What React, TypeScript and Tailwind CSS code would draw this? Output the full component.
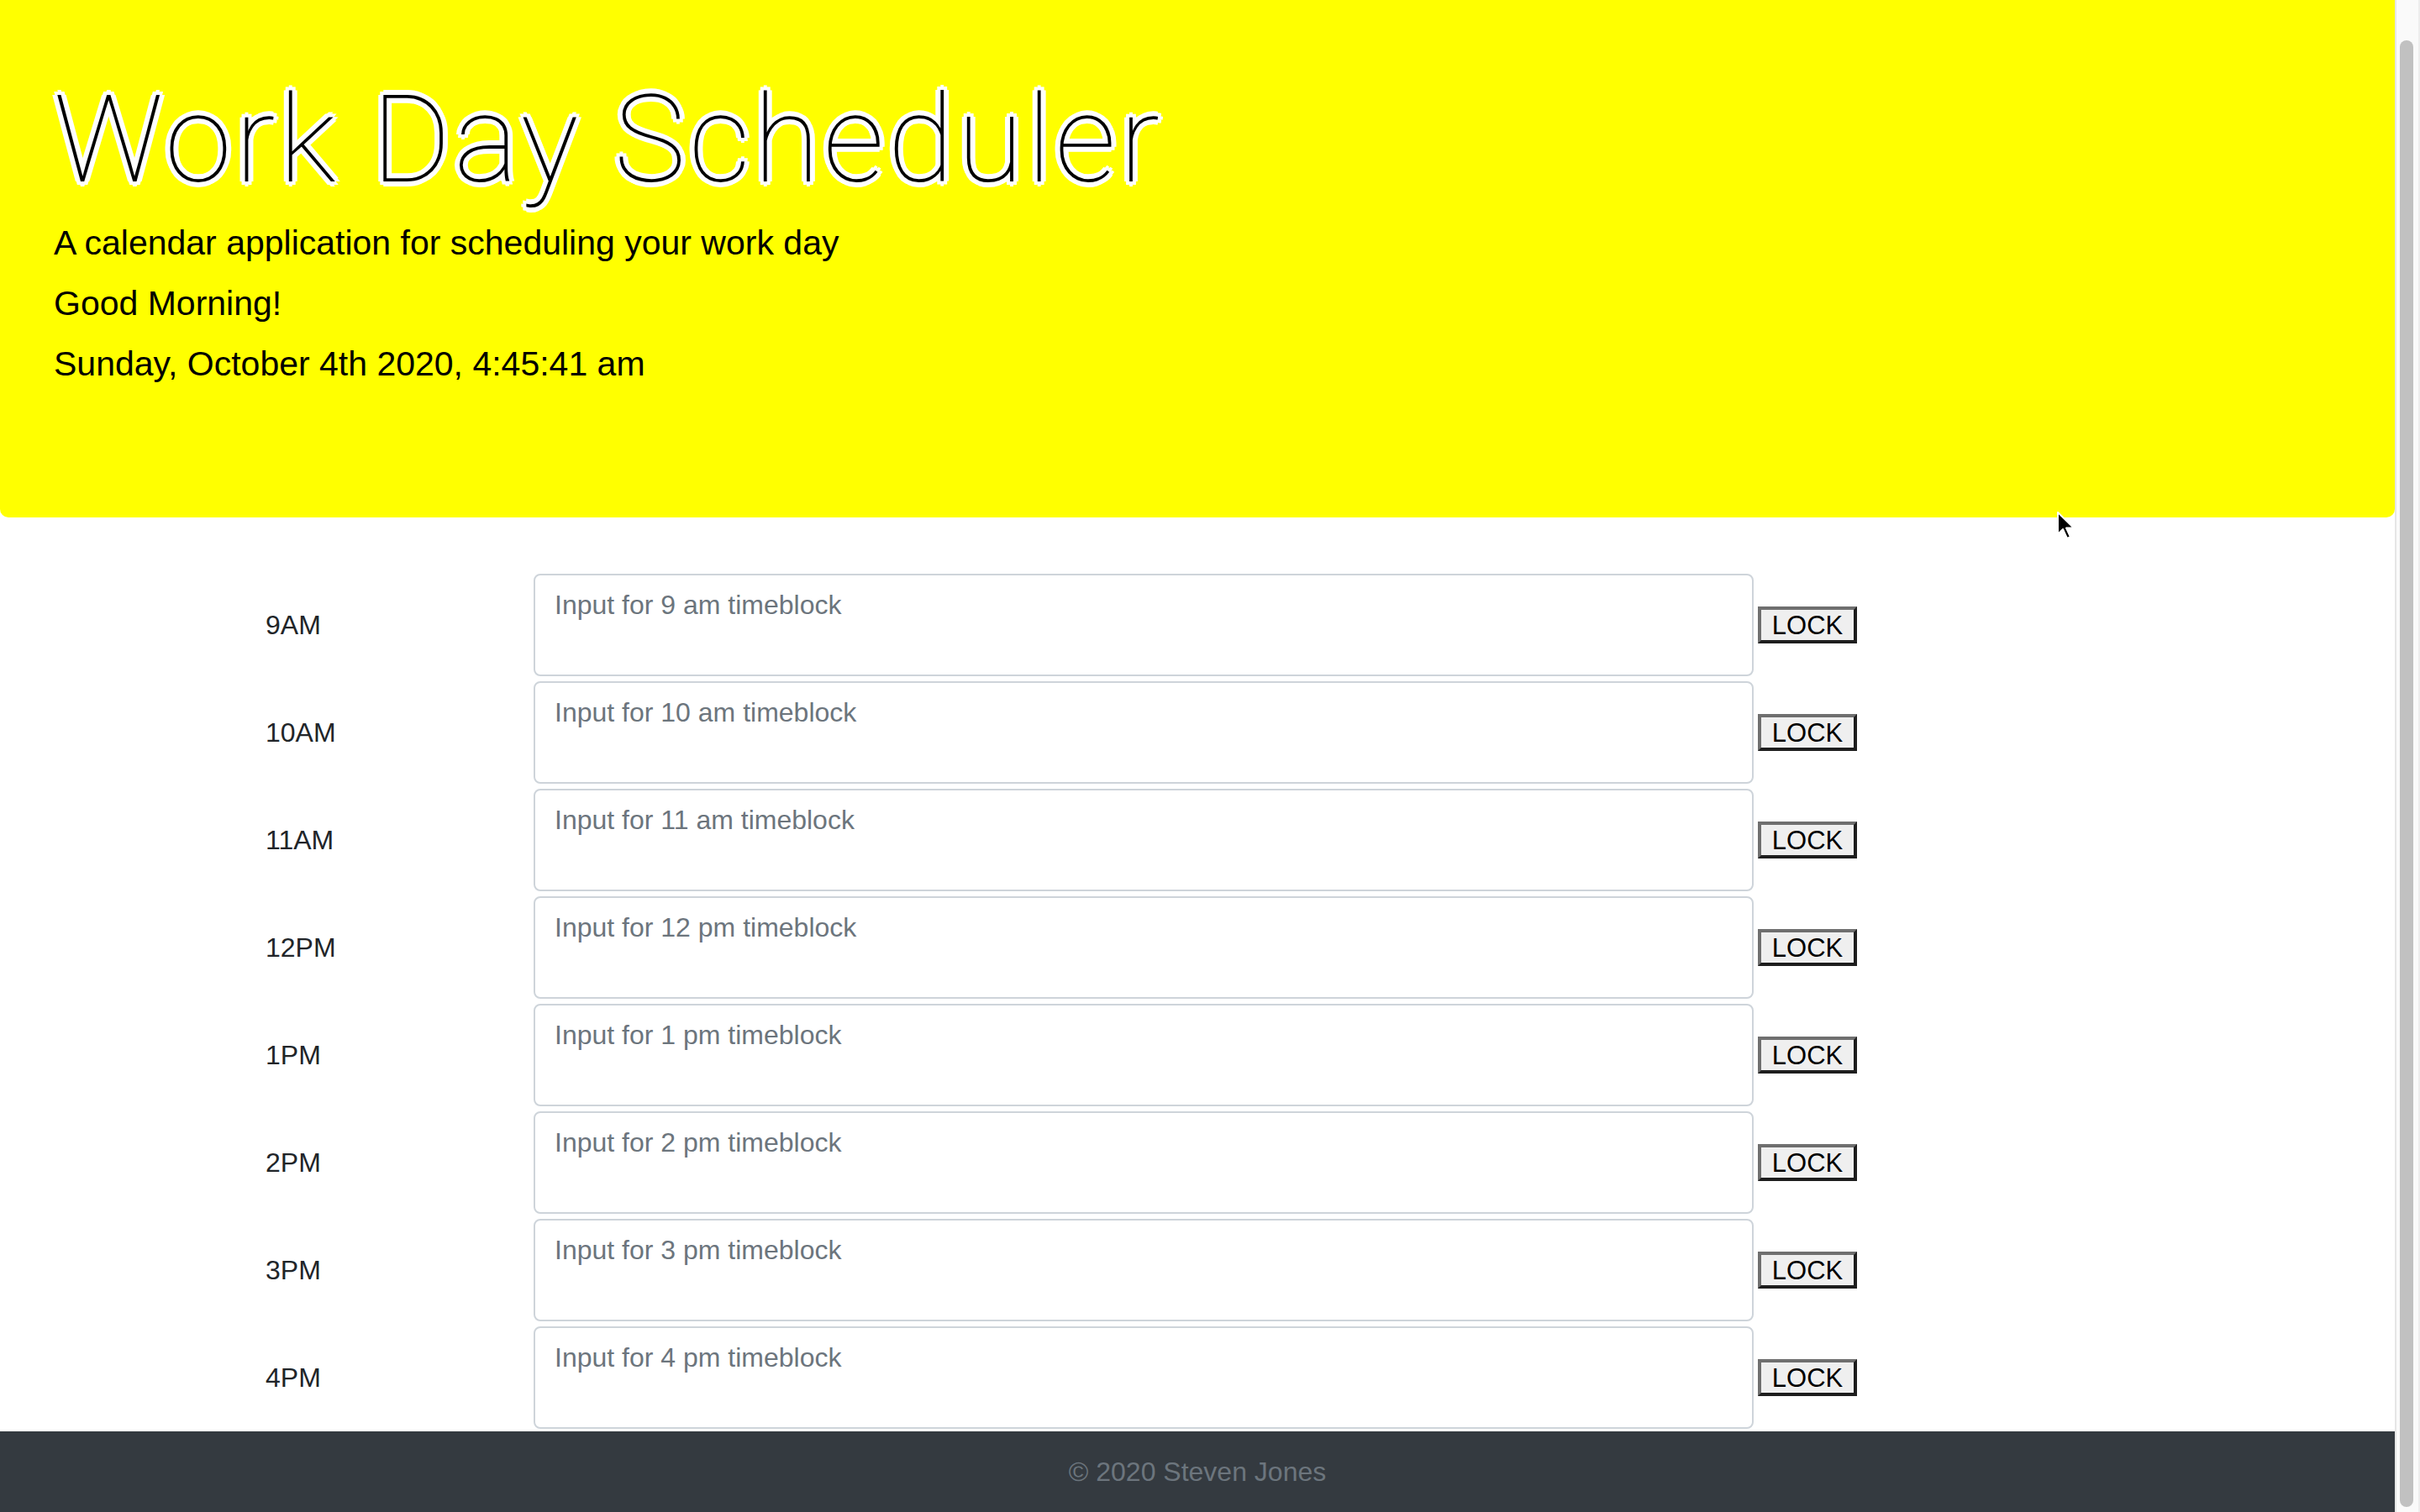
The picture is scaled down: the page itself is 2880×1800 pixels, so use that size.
import React from 'react';

const HOURS = [
  { label: '9AM', hint: '9 am' },
  { label: '10AM', hint: '10 am' },
  { label: '11AM', hint: '11 am' },
  { label: '12PM', hint: '12 pm' },
  { label: '1PM', hint: '1 pm' },
  { label: '2PM', hint: '2 pm' },
  { label: '3PM', hint: '3 pm' },
  { label: '4PM', hint: '4 pm' },
];

function TimeBlock({ label, hint }: { label: string; hint: string }) {
  return (
    <div className="flex items-center h-[122px] shrink-0">
      <div className="w-[320px] pl-[1px] text-[32px] leading-none text-[#212529]">{label}</div>
      <textarea
        className="w-[1452px] h-[122px] resize-none rounded-[8px] border-2 border-[#ced4da] bg-white pl-[23px] pr-[24px] pt-[11px] pb-[12px] text-[32px] leading-[48px] text-[#495057] placeholder:text-[#6c757d] outline-none"
        placeholder={`Input for ${hint} timeblock`}
      />
      <button className="ml-[5px] w-[118px] h-[44px] border-[4px] border-t-[#6f6f6f] border-l-[#6f6f6f] border-b-[#1e1e1e] border-r-[#1e1e1e] bg-[#efefef] text-[31px] leading-none text-black">
        LOCK
      </button>
    </div>
  );
}

export default function App() {
  return (
    <div className="relative flex w-[2880px] h-[1800px] overflow-hidden bg-white font-['Liberation_Sans',Arial,sans-serif]">
      <div className="flex flex-col w-[2850px] h-full">
        {/* Header */}
        <header className="h-[616px] shrink-0 rounded-b-[10px] bg-[#ffff00] pl-[64px] pt-[95px]">
          <h1 className="font-['Roboto',sans-serif] font-thin text-[144px] leading-none tracking-[4px] text-black [text-shadow:2px_0_0_#fff,-2px_0_0_#fff,0_2px_0_#fff,0_-2px_0_#fff,2px_2px_0_#fff,-2px_-2px_0_#fff,2px_-2px_0_#fff,-2px_2px_0_#fff,4px_0_0_#fff,-4px_0_0_#fff,0_4px_0_#fff,0_-4px_0_#fff,3px_3px_0_#fff,-3px_-3px_0_#fff,3px_-3px_0_#fff,-3px_3px_0_#fff,6px_0_0_#fff,-6px_0_0_#fff,0_6px_0_#fff,0_-6px_0_#fff,4px_4px_0_#fff,-4px_-4px_0_#fff,4px_-4px_0_#fff,-4px_4px_0_#fff]">
            Work Day Scheduler
          </h1>
          <div className="mt-[14px] text-[41px] leading-[72px] text-black">
            <p>A calendar application for scheduling your work day</p>
            <p>Good Morning!</p>
            <p>Sunday, October 4th 2020, 4:45:41 am</p>
          </div>
        </header>

        {/* Time blocks */}
        <main className="flex-1 overflow-hidden pt-[67px] pl-[315px]">
          <div className="flex flex-col gap-[6px]">
            {HOURS.map((h) => (
              <TimeBlock key={h.label} label={h.label} hint={h.hint} />
            ))}
          </div>
        </main>

        {/* Footer */}
        <footer className="h-[96px] shrink-0 flex items-center justify-center bg-[#343a40] text-[32px] text-[#6c757d]">
          © 2020 Steven Jones
        </footer>
      </div>

      {/* Scrollbar */}
      <div className="flex flex-col w-[30px] h-full border-l-2 border-r-2 border-l-[#e6e6e6] border-r-[#ededed] bg-[#fafafa] pt-[48px] pb-[6px] pl-[4px]">
        <div className="flex-1 w-[16px] rounded-full bg-[#c1c1c1]" />
      </div>

      {/* Mouse pointer */}
      <svg className="absolute left-[2447px] top-[608px]" width="24" height="36" viewBox="0 0 12 18">
        <path d="M1 1 L1 14 L4 11 L6.5 16.5 L8.5 15.6 L6 10.3 L10.5 10.3 Z" fill="#000" stroke="#fff" strokeWidth="1" strokeLinejoin="round" />
      </svg>
    </div>
  );
}
